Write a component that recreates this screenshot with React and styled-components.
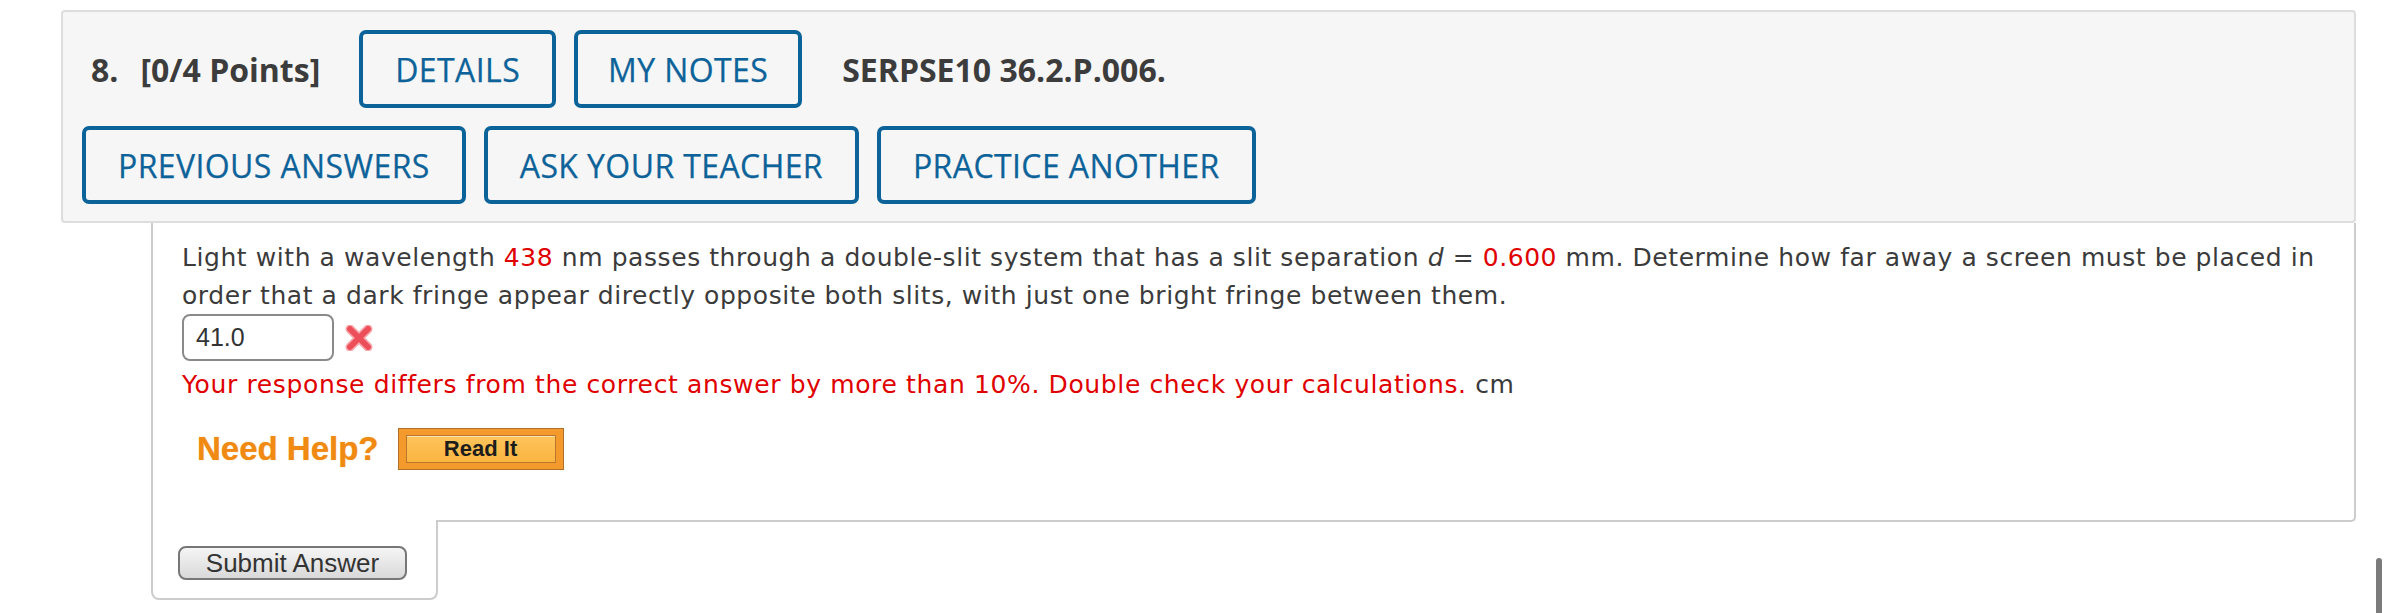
import React from 'react';
import styled, { createGlobalStyle } from 'styled-components';

const GlobalStyle = createGlobalStyle`
  body {
    margin: 0;
    background: #ffffff;
  }
`;

const Page = styled.div`
  padding: 10px 32px 0 61px;
`;

const Header = styled.div`
  background: #f6f6f6;
  border: 2px solid #dddddd;
  border-radius: 4px;
  padding: 18px 19px 17px 19px;
  display: flex;
  flex-direction: column;
  gap: 18px;
`;

const Row = styled.div`
  display: flex;
  align-items: center;
  gap: ${p => p.gap ?? 18}px;
  padding-left: ${p => p.indent ?? 0}px;
`;

const Title = styled.span`
  font-family: "Open Sans", sans-serif;
  font-weight: 700;
  font-size: 32px;
  color: #3c3c3c;
  margin-left: ${p => p.space ?? 0}px;
  margin-right: ${p => p.after ?? 0}px;
  white-space: nowrap;
`;

const ActionButton = styled.button`
  box-sizing: border-box;
  height: 78px;
  padding: 0 ${p => p.pad ?? 32}px;
  margin-left: ${p => p.space ?? 0}px;
  background: #f6f6f6;
  border: 4px solid #0b6399;
  border-radius: 7px;
  font-family: "Open Sans", sans-serif;
  font-size: 32px;
  font-weight: 500;
  letter-spacing: 0.4px;
  -webkit-text-stroke: 0.25px #0d6399;
  color: #0d6399;
  white-space: nowrap;
  cursor: pointer;
`;

const QuestionBox = styled.div`
  margin-left: 90px;
  background: #ffffff;
  border: 2px solid #cccccc;
  border-top: none;
  border-radius: 0 0 5px 0;
  padding: 16px 6px 50px 29px;
`;

const Prompt = styled.p`
  margin: 0;
  font-family: "DejaVu Sans", Verdana, sans-serif;
  font-size: 25px;
  letter-spacing: 0.57px;
  line-height: 38px;
  color: #3b3b3b;
  white-space: nowrap;
`;

const Value = styled.span`
  color: #e00000;
`;

const AnswerRow = styled.div`
  display: flex;
  align-items: center;
  gap: 11px;
  margin-top: -1px;
`;

const AnswerInput = styled.input`
  box-sizing: border-box;
  width: 152px;
  height: 47px;
  border: 2px solid #8a8a8a;
  border-radius: 8px;
  padding: 0 0 0 12px;
  font-family: "Liberation Sans", Arial, sans-serif;
  font-size: 25px;
  color: #333333;
  background: #ffffff;
  outline: none;
`;

const Feedback = styled.div`
  margin-top: 5px;
  font-family: "DejaVu Sans", Verdana, sans-serif;
  font-size: 25px;
  letter-spacing: 0.63px;
  line-height: 38px;
  color: #e00000;
`;

const Unit = styled.span`
  color: #3b3b3b;
`;

const HelpRow = styled.div`
  display: flex;
  align-items: center;
  gap: 19px;
  margin-top: 24px;
  padding-left: 15px;
`;

const NeedHelp = styled.span`
  font-family: "Liberation Sans", Arial, sans-serif;
  font-weight: 700;
  font-size: 33px;
  line-height: 42px;
  color: #f08a12;
  text-shadow: 0 0 1px rgba(240, 138, 18, 0.7);
`;

const ReadIt = styled.button`
  box-sizing: border-box;
  width: 166px;
  height: 42px;
  padding: 6px 7px 6px 7px;
  border: 1px solid #b0702a;
  background: #f49a2c;
  cursor: pointer;
  display: flex;
`;

const ReadItFace = styled.span`
  flex: 1;
  display: flex;
  align-items: center;
  justify-content: center;
  border: 1px solid #b9782e;
  background: linear-gradient(#fdc45c, #fbb440);
  box-shadow: inset 0 1px 0 rgba(255, 255, 255, 0.5);
  font-family: "Liberation Sans", Arial, sans-serif;
  font-weight: 700;
  font-size: 22px;
  color: #1c1c1c;
`;

const SubmitTab = styled.div`
  box-sizing: border-box;
  width: 287px;
  margin-left: 90px;
  margin-top: -2px;
  background: #ffffff;
  border: 2px solid #cccccc;
  border-top: none;
  border-radius: 0 0 8px 8px;
  padding: 26px 0 18px 25px;
`;

const SubmitButton = styled.button`
  box-sizing: border-box;
  width: 229px;
  height: 34px;
  border: 2px solid #777777;
  border-radius: 8px;
  background: linear-gradient(#f5f5f5, #d9d9d9);
  font-family: "Liberation Sans", Arial, sans-serif;
  font-size: 26px;
  line-height: 28px;
  color: #333333;
  padding: 0;
  cursor: pointer;
`;

const ScrollThumb = styled.div`
  position: fixed;
  right: 6px;
  bottom: 0;
  width: 6px;
  height: 55px;
  border-radius: 3px 3px 0 0;
  background: #7b7b7b;
`;

const WrongMark = () => (
  <svg width="28" height="26" viewBox="0 0 28 26">
    <g strokeLinecap="round">
      <path d="M5 4 L23 22 M23 4 L5 22" stroke="#f8a9ad" strokeWidth="9" />
      <path d="M5 4 L23 22 M23 4 L5 22" stroke="#ec4f59" strokeWidth="6" />
    </g>
  </svg>
);

const App = () => {
  return (
    <Page>
      <GlobalStyle />
      <Header>
        <Row gap={0} indent={9}>
          <Title>8.</Title>
          <Title space={22} after={39}>[0/4 Points]</Title>
          <ActionButton>DETAILS</ActionButton>
          <ActionButton space={18} pad={30}>MY NOTES</ActionButton>
          <Title space={40}>SERPSE10 36.2.P.006.</Title>
        </Row>
        <Row>
          <ActionButton>PREVIOUS ANSWERS</ActionButton>
          <ActionButton>ASK YOUR TEACHER</ActionButton>
          <ActionButton>PRACTICE ANOTHER</ActionButton>
        </Row>
      </Header>
      <QuestionBox>
        <Prompt>
          Light with a wavelength <Value>438</Value> nm passes through a double-slit system that has a slit
          separation <i>d</i> = <Value>0.600</Value> mm. Determine how far away a screen must be placed in
          <br />
          order that a dark fringe appear directly opposite both slits, with just one bright fringe between them.
        </Prompt>
        <AnswerRow>
          <AnswerInput defaultValue="41.0" />
          <WrongMark />
        </AnswerRow>
        <Feedback>
          Your response differs from the correct answer by more than 10%. Double check your calculations.{' '}
          <Unit>cm</Unit>
        </Feedback>
        <HelpRow>
          <NeedHelp>Need Help?</NeedHelp>
          <ReadIt>
            <ReadItFace>Read It</ReadItFace>
          </ReadIt>
        </HelpRow>
      </QuestionBox>
      <SubmitTab>
        <SubmitButton>Submit Answer</SubmitButton>
      </SubmitTab>
      <ScrollThumb />
    </Page>
  );
};

export default App;
